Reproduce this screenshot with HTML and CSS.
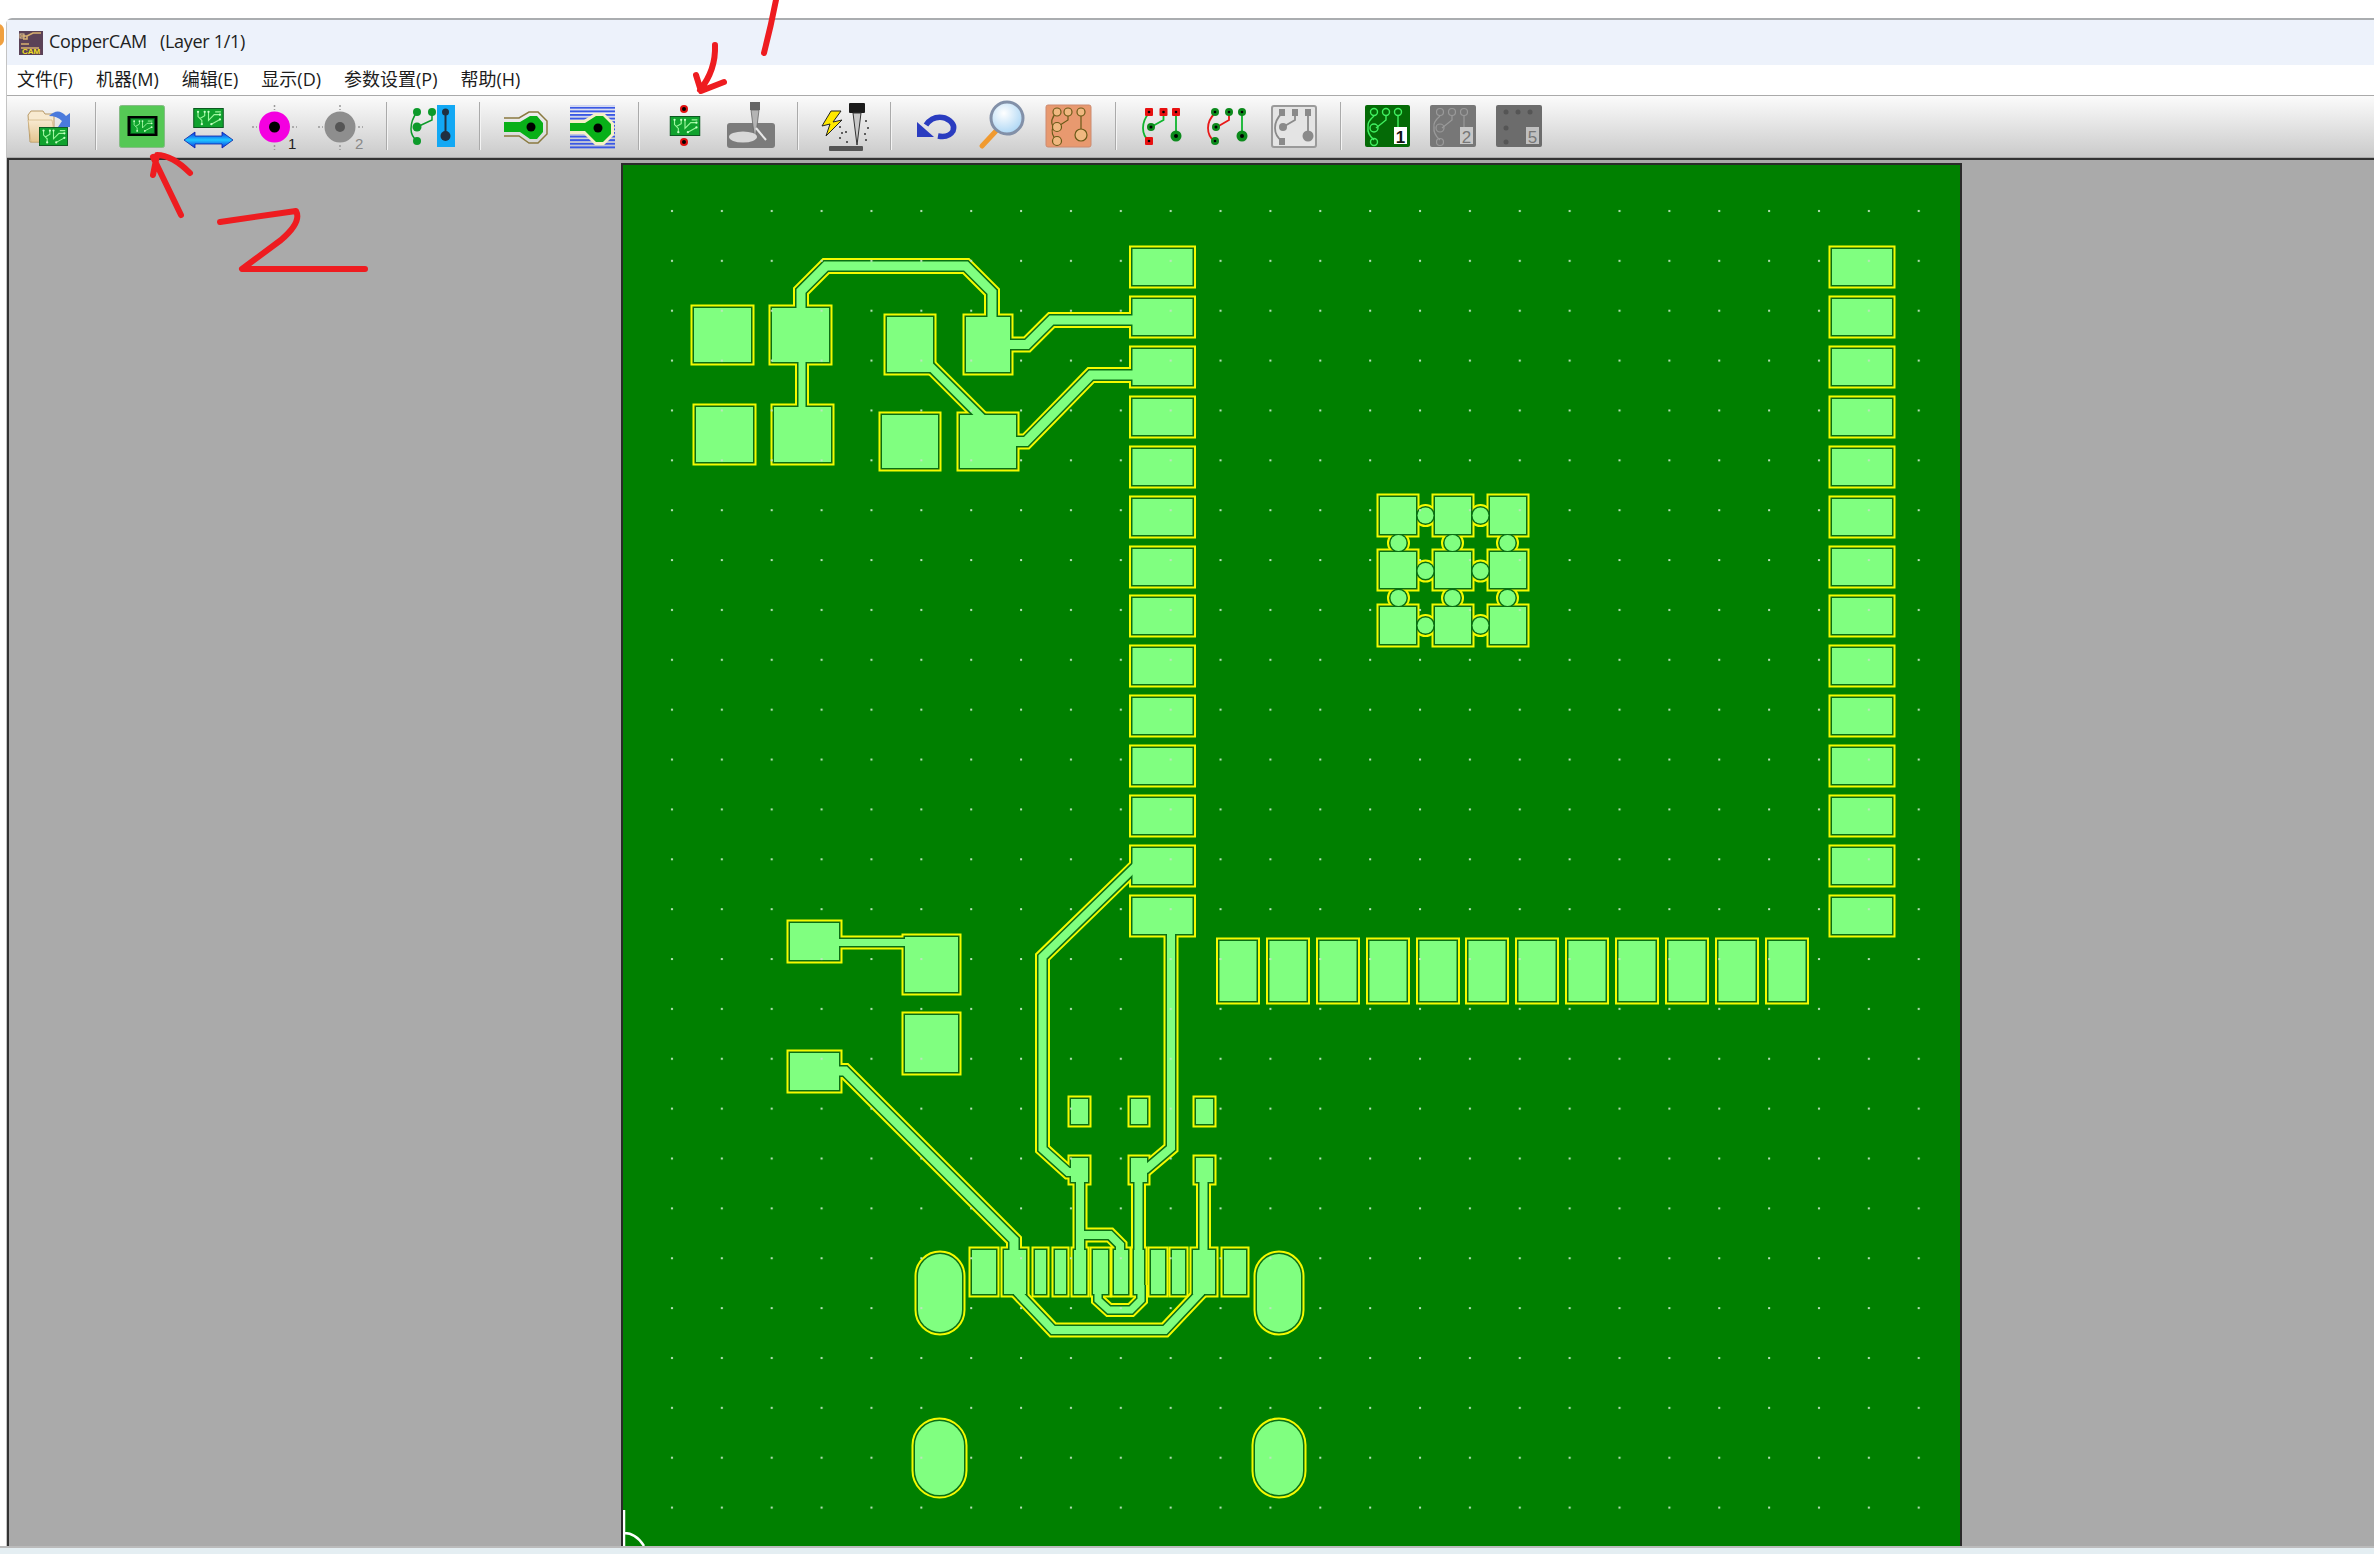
FILE: index.html
```html
<!DOCTYPE html>
<html lang="zh">
<head>
    <meta charset="UTF-8" />
    <title>CopperCAM</title>
    <link rel="stylesheet" href="styles.css">
</head>
<body>
<div class="page">
    <div class="behind"></div>
    <svg class="shared" width="0" height="0">
        <defs>
            <symbol id="mini" viewBox="0 0 32 21">
                <rect x="0.5" y="0.5" width="31" height="20" fill="#10a22e" stroke="#07541c"/>
                <path d="M5 4V9L9 13V17M12 4V8L7 11M16 4V13L22 7H28M19 17L28 12M23 4H29" fill="none" stroke="#9cf79c" stroke-width="1.2"/>
                <g fill="#c8ffc8"><circle cx="5" cy="4" r="1.2"/><circle cx="12" cy="4" r="1.2"/><circle cx="16" cy="4" r="1.2"/><circle cx="9" cy="17" r="1.2"/><circle cx="19" cy="17" r="1.2"/><circle cx="28" cy="12" r="1.2"/><circle cx="28" cy="7" r="1.2"/></g>
            </symbol>
            <linearGradient id="arrow-blue" x1="0" y1="0" x2="0" y2="1">
                <stop offset="0" stop-color="#0a2ee0"/><stop offset="0.5" stop-color="#20c8ff"/><stop offset="1" stop-color="#0a2ee0"/>
            </linearGradient>
            <radialGradient id="lens" cx="0.4" cy="0.35" r="0.7">
                <stop offset="0" stop-color="#ffffff"/><stop offset="1" stop-color="#a8d4f4"/>
            </radialGradient>
            <linearGradient id="folder" x1="0" y1="0" x2="0" y2="1">
                <stop offset="0" stop-color="#f8ead0"/><stop offset="1" stop-color="#e4c490"/>
            </linearGradient>
            <pattern id="stripes" width="6" height="3.6" patternUnits="userSpaceOnUse">
                <rect width="6" height="2" fill="#3a58e4"/>
            </pattern>
        </defs>
    </svg>

    <div class="window">
        <div class="titlebar">
            <svg class="app-icon" width="24" height="24" viewBox="0 0 24 24">
                <rect width="24" height="24" fill="#5b4257"/>
                <path d="M2 5H8V8H4M8 5L14 2H22M2 13H10M2 17H20" fill="none" stroke="#d8b070" stroke-width="1.6"/>
                <rect x="1" y="3" width="4" height="4" fill="none" stroke="#e8c890"/>
                <text class="app-icon-text" x="12" y="23">CAM</text>
            </svg>
            <span class="title-text">CopperCAM   (Layer 1/1)</span>
        </div>
        <nav class="menubar">
            <span>文件(F)</span>
            <span>机器(M)</span>
            <span>编辑(E)</span>
            <span>显示(D)</span>
            <span>参数设置(P)</span>
            <span>帮助(H)</span>
        </nav>
        <div class="toolbar">
            <svg class="tool" viewBox="0 0 66 61">
                <path d="M12 19L15 15H27L29 18H38V46H14Z" fill="#f8ead0" stroke="#b89a68"/>
                <path d="M12 24H36L40 46H15Z" fill="url(#folder)" stroke="#c8a870" stroke-width="0.6"/>
                <path d="M33 20Q42 11 50 20L54 17V31H42L46 25Q41 20 33 20Z" fill="#4a7adc"/>
                <use href="#mini" x="22" y="31" width="31" height="19"/>
            </svg>
            <i class="sep"></i>
            <svg class="tool" viewBox="0 0 66 61">
                <rect x="10.5" y="9.5" width="45" height="42" rx="2" fill="#55c855" stroke="#86bb86"/>
                <rect x="18.5" y="20" width="30" height="20" fill="#000"/>
                <use href="#mini" x="20.5" y="22" width="26" height="16"/>
            </svg>
            <svg class="tool" viewBox="0 0 66 61">
                <use href="#mini" x="18" y="12" width="31" height="20"/>
                <path d="M9 44L20 36V40H47V36L58 44L47 52V48H20V52Z" fill="url(#arrow-blue)" stroke="#0a1ea8" stroke-width="0.8"/>
            </svg>
            <svg class="tool" viewBox="0 0 66 61">
                <path class="tick" d="M33.5 9V14M33.5 49V54M11 31H16M51 31H56"/>
                <circle cx="33.5" cy="31" r="15.5" fill="#f400e0"/>
                <circle cx="33.5" cy="31" r="5.5" fill="#000"/>
                <text class="tool-num" x="47" y="53">1</text>
            </svg>
            <svg class="tool" viewBox="0 0 66 61">
                <path class="tick" d="M33 9V14M33 49V54M11 31H16M51 31H56"/>
                <circle cx="33" cy="31" r="15.5" fill="#8e8e8e"/>
                <circle cx="33" cy="31" r="5" fill="#555"/>
                <text class="tool-num dim" x="48" y="53">2</text>
            </svg>
            <i class="sep"></i>
            <svg class="tool" viewBox="0 0 66 61">
                <path d="M17 16Q11 24 11 33Q11 40 17 45M32 16V24L17 31" fill="none" stroke="#0c9a2a" stroke-width="1.5"/>
                <g fill="#0c9a2a"><circle cx="17" cy="16" r="4"/><circle cx="32" cy="16" r="4"/><circle cx="17" cy="31" r="4.5"/><circle cx="17" cy="45" r="4"/></g>
                <rect x="37" y="9" width="18" height="42" fill="#12a8f4"/>
                <path d="M45.5 16V40" stroke="#203040" stroke-width="2"/>
                <circle cx="45.5" cy="16" r="3.5" fill="#203040"/><circle cx="45.5" cy="40" r="5" fill="#203040"/>
            </svg>
            <i class="sep"></i>
            <svg class="tool" viewBox="0 0 66 61">
                <path d="M11 22H26L36 16H45L54 25V38L45 47H36L26 40H11" fill="none" stroke="#8a7a40" stroke-width="1.5"/>
                <path d="M11 26H27L37 20H44L50 27V36L44 43H37L27 36H11Z" fill="#08b018"/>
                <circle cx="38" cy="31" r="4.5" fill="#000"/>
            </svg>
            <svg class="tool" viewBox="0 0 66 61">
                <rect x="11" y="9" width="45" height="44" fill="url(#stripes)"/>
                <path d="M11 24H25L36 17H45L55 27V39L45 49H36L25 38H11Z" fill="#f6f0c8"/>
                <path d="M11 27H26L37 20H44L52 28V38L44 46H37L26 35H11Z" fill="#08b018"/>
                <circle cx="39" cy="32" r="4.5" fill="#000"/>
            </svg>
            <i class="sep"></i>
            <svg class="tool" viewBox="0 0 66 61">
                <use href="#mini" x="17" y="20" width="32" height="20"/>
                <circle cx="32" cy="13" r="4" fill="#e01010"/><circle cx="32" cy="13" r="2" fill="#000"/>
                <circle cx="32" cy="46" r="4" fill="#e01010"/><circle cx="32" cy="46" r="2" fill="#000"/>
            </svg>
            <svg class="tool" viewBox="0 0 66 61">
                <rect x="9" y="27" width="48" height="25" rx="3" fill="#7b7b7b"/>
                <rect x="32" y="6" width="10" height="8" fill="#666"/>
                <path d="M33 14H41L39 30L37 44L35 30Z" fill="#b4b4b4" stroke="#666" stroke-width="0.8"/>
                <ellipse cx="25" cy="41" rx="14" ry="5.5" fill="#d8d8d8"/>
                <path d="M38 32L48 44" stroke="#e8e8e8" stroke-width="2"/>
            </svg>
            <i class="sep"></i>
            <svg class="tool" viewBox="0 0 66 61">
                <rect x="18" y="50" width="34" height="5" rx="1" fill="#555"/>
                <rect x="38" y="7" width="16" height="10" rx="1" fill="#1a1a1a"/>
                <path d="M42 17H50L46 49Z" fill="#c8c8c8" stroke="#333"/>
                <path d="M20 15L11 30L19 28L15 40L31 24L22 26L30 15Z" fill="#ffe800" stroke="#222"/>
                <path class="spark" d="M28 31h2M34 36h2M28 42h2M54 25h2M56 32h2M53 38h2M54 44h2M35 46h2M30 37h2"/>
            </svg>
            <i class="sep"></i>
            <svg class="tool" viewBox="0 0 66 61">
                <path d="M22 29Q29 19 41 22Q52 27 49 35Q45 42 34 40" fill="none" stroke="#2a3cc0" stroke-width="5.5"/>
                <path d="M13 26L30 41H13Z" fill="#2a3cc0"/>
            </svg>
            <svg class="tool" viewBox="0 0 66 61">
                <path d="M26 35L12 50" stroke="#f09a30" stroke-width="5" stroke-linecap="round"/>
                <circle cx="37" cy="22" r="16" fill="url(#lens)" stroke="#8290a8" stroke-width="3"/>
            </svg>
            <svg class="tool" viewBox="0 0 66 61">
                <rect x="10" y="9" width="45" height="42" rx="2" fill="#e8996f" stroke="#cc8a70"/>
                <g class="ring-lines">
                    <path d="M21 16Q13 24 17 31Q14 38 21 45M32 16V24L21 31M45 16V34"/>
                    <circle cx="21" cy="16" r="4"/><circle cx="32" cy="16" r="4"/><circle cx="45" cy="16" r="4"/>
                    <circle cx="21" cy="31" r="4.5"/><circle cx="21" cy="45" r="4.5"/><circle cx="45" cy="39" r="6"/>
                </g>
            </svg>
            <i class="sep"></i>
            <svg class="tool" viewBox="0 0 66 61">
                <path d="M20 17Q14 24 14 32Q14 40 20 45M34.5 17V24L22 31M47 17V40" fill="none" stroke="#0fb52e" stroke-width="1.8"/>
                <g fill="#e81010"><rect x="16" y="12" width="8" height="8" rx="1"/><rect x="30.5" y="12" width="8" height="8" rx="1"/><rect x="43" y="12" width="8" height="8" rx="1"/><rect x="16" y="41" width="8" height="8" rx="1"/></g>
                <circle cx="22" cy="31" r="4" fill="#0c8a1c"/><circle cx="47" cy="40" r="5.5" fill="#0c8a1c"/>
                <g fill="#000"><circle cx="20" cy="16" r="1.3"/><circle cx="34.5" cy="16" r="1.3"/><circle cx="47" cy="16" r="1.3"/><circle cx="22" cy="31" r="1.5"/><circle cx="47" cy="40" r="2"/><circle cx="20" cy="45" r="1.3"/></g>
            </svg>
            <svg class="tool" viewBox="0 0 66 61">
                <path d="M20 17Q13 24 13 32Q13 40 19 45" fill="none" stroke="#e81818" stroke-width="1.8"/>
                <path d="M34 17V24L22 31" fill="none" stroke="#e81818" stroke-width="1.8"/>
                <path d="M47 17V40" fill="none" stroke="#0fb52e" stroke-width="1.8"/>
                <g fill="#0c8a1c"><circle cx="20" cy="16" r="4"/><circle cx="34" cy="16" r="4"/><circle cx="47" cy="16" r="4"/><circle cx="20" cy="45" r="4"/><circle cx="21" cy="31" r="4"/><circle cx="47" cy="40" r="5.5"/></g>
                <g fill="#000"><circle cx="20" cy="16" r="1.3"/><circle cx="34" cy="16" r="1.3"/><circle cx="47" cy="16" r="1.3"/><circle cx="21" cy="31" r="1.5"/><circle cx="47" cy="40" r="2"/><circle cx="20" cy="45" r="1.3"/></g>
            </svg>
            <svg class="tool" viewBox="0 0 66 61">
                <rect x="11" y="10" width="44" height="41" rx="2" fill="#e4e4e4" stroke="#9a9a9a" stroke-width="2"/>
                <path d="M21 17Q14 24 14 32Q14 40 21 45M34 17V24L22 31M47 17V40" fill="none" stroke="#8a8a8a" stroke-width="1.8"/>
                <g fill="#8a8a8a"><rect x="18" y="13" width="6" height="7"/><rect x="31" y="13" width="6" height="7"/><rect x="44" y="13" width="6" height="7"/><rect x="18" y="42" width="6" height="7"/><circle cx="22" cy="31" r="4"/><circle cx="47" cy="40" r="5.5"/></g>
            </svg>
            <i class="sep"></i>
            <svg class="tool" viewBox="0 0 66 61">
                <rect x="11" y="9" width="45" height="42" rx="2" fill="#046a06"/>
                <g class="ring-bright">
                    <path d="M20 20Q13 26 14 31Q13 38 20 44M32 20V24L22 32M44 20V31"/>
                    <circle cx="20" cy="16" r="3.5"/><circle cx="32" cy="16" r="3.5"/><circle cx="44" cy="16" r="3.5"/>
                    <circle cx="20" cy="32" r="4"/><circle cx="20" cy="46" r="3.5"/>
                </g>
                <rect x="40" y="31" width="13" height="17" fill="#fff"/>
                <text class="layer-num" x="46.5" y="47">1</text>
            </svg>
            <svg class="tool" viewBox="0 0 66 61">
                <rect x="10" y="9" width="46" height="42" rx="2" fill="#777"/>
                <g class="ring-dim">
                    <path d="M20 20Q13 26 14 31Q13 38 20 44M32 20V24L22 32M44 20V31"/>
                    <circle cx="20" cy="16" r="3.5"/><circle cx="32" cy="16" r="3.5"/><circle cx="44" cy="16" r="3.5"/>
                    <circle cx="20" cy="32" r="4"/><circle cx="20" cy="46" r="3.5"/>
                </g>
                <rect x="40" y="31" width="13" height="17" fill="#c8c8c8"/>
                <text class="layer-num dim" x="46.5" y="47">2</text>
            </svg>
            <svg class="tool" viewBox="0 0 66 61">
                <rect x="10" y="9" width="46" height="42" rx="2" fill="#6c6c6c"/>
                <g fill="#555"><circle cx="20" cy="16" r="2.5"/><circle cx="32" cy="16" r="2.5"/><circle cx="44" cy="16" r="2.5"/><circle cx="20" cy="32" r="2.5"/><circle cx="20" cy="46" r="2.5"/></g>
                <rect x="40" y="31" width="13" height="17" fill="#c0c0c0"/>
                <text class="layer-num dim" x="46.5" y="47">5</text>
            </svg>
        </div>
        <main class="canvas">
            <div class="board">
                <svg class="board-svg" viewBox="623 165 1337 1381" width="1337" height="1381">
                    <defs>
                        <pattern id="dots" x="647" y="186" width="49.87" height="49.87" patternUnits="userSpaceOnUse">
                            <rect x="24" y="24" width="2" height="2" fill="#bfe4bf"/>
                        </pattern>
                        <g id="column">
                            <rect class="pad" y="249" width="60" height="36"/>
                            <rect class="pad" y="299" width="60" height="36"/>
                            <rect class="pad" y="349" width="60" height="36"/>
                            <rect class="pad" y="399" width="60" height="36"/>
                            <rect class="pad" y="449" width="60" height="36"/>
                            <rect class="pad" y="499" width="60" height="36"/>
                            <rect class="pad" y="549" width="60" height="36"/>
                            <rect class="pad" y="598" width="60" height="36"/>
                            <rect class="pad" y="648" width="60" height="36"/>
                            <rect class="pad" y="698" width="60" height="36"/>
                            <rect class="pad" y="748" width="60" height="36"/>
                            <rect class="pad" y="798" width="60" height="36"/>
                            <rect class="pad" y="848" width="60" height="36"/>
                            <rect class="pad" y="898" width="60" height="36"/>
                        </g>
                        <g id="copper">
                            <use href="#column" x="1132.5"/>
                            <use href="#column" x="1832"/>

                            <!-- bottom row -->
                            <rect class="pad" x="1219.5" y="941" width="37" height="60"/>
                            <rect class="pad" x="1269.5" y="941" width="37" height="60"/>
                            <rect class="pad" x="1319.5" y="941" width="37" height="60"/>
                            <rect class="pad" x="1369.5" y="941" width="37" height="60"/>
                            <rect class="pad" x="1419.5" y="941" width="37" height="60"/>
                            <rect class="pad" x="1468.5" y="941" width="37" height="60"/>
                            <rect class="pad" x="1518.5" y="941" width="37" height="60"/>
                            <rect class="pad" x="1568.5" y="941" width="37" height="60"/>
                            <rect class="pad" x="1618.5" y="941" width="37" height="60"/>
                            <rect class="pad" x="1668.5" y="941" width="37" height="60"/>
                            <rect class="pad" x="1718.5" y="941" width="37" height="60"/>
                            <rect class="pad" x="1768.5" y="941" width="37" height="60"/>

                            <!-- top left cluster -->
                            <rect class="pad" x="694" y="308" width="57" height="54"/>
                            <rect class="pad" x="772" y="308" width="57" height="54"/>
                            <rect class="pad" x="696" y="407" width="57" height="55"/>
                            <rect class="pad" x="774" y="407" width="57" height="55"/>
                            <rect class="pad" x="887" y="317" width="46" height="55"/>
                            <rect class="pad" x="966" y="317" width="44" height="55"/>
                            <rect class="pad" x="882" y="415" width="56" height="53"/>
                            <rect class="pad" x="960" y="415" width="56" height="53"/>
                            <polyline class="trace w9" points="992,330 992,292 966,266 826,266 801,291 801,312"/>
                            <polyline class="trace w7" points="802,350 802,420"/>
                            <polyline class="trace w8" points="925,361 985,421"/>
                            <polyline class="trace w9" points="1000,344.5 1027,344.5 1051.5,320 1140,320"/>
                            <polyline class="trace w9" points="1005,441.5 1026,441.5 1091,375 1140,375"/>

                            <!-- 3x3 grid -->
                            <rect class="pad" x="1380" y="497" width="36" height="37"/>
                            <rect class="pad" x="1435" y="497" width="36" height="37"/>
                            <rect class="pad" x="1490" y="497" width="36" height="37"/>
                            <rect class="pad" x="1380" y="552" width="36" height="36"/>
                            <rect class="pad" x="1435" y="552" width="36" height="36"/>
                            <rect class="pad" x="1490" y="552" width="36" height="36"/>
                            <rect class="pad" x="1380" y="607" width="36" height="37"/>
                            <rect class="pad" x="1435" y="607" width="36" height="37"/>
                            <rect class="pad" x="1490" y="607" width="36" height="37"/>
                            <circle class="pad" cx="1425.5" cy="515.5" r="8"/>
                            <circle class="pad" cx="1480.5" cy="515.5" r="8"/>
                            <circle class="pad" cx="1425.5" cy="571" r="8"/>
                            <circle class="pad" cx="1480.5" cy="571" r="8"/>
                            <circle class="pad" cx="1425.5" cy="625.5" r="8"/>
                            <circle class="pad" cx="1480.5" cy="625.5" r="8"/>
                            <circle class="pad" cx="1398.5" cy="543" r="8"/>
                            <circle class="pad" cx="1452.5" cy="543" r="8"/>
                            <circle class="pad" cx="1507.5" cy="543" r="8"/>
                            <circle class="pad" cx="1398.5" cy="598" r="8"/>
                            <circle class="pad" cx="1452.5" cy="598" r="8"/>
                            <circle class="pad" cx="1507.5" cy="598" r="8"/>

                            <!-- left middle -->
                            <rect class="pad" x="790" y="923" width="49" height="37"/>
                            <rect class="pad" x="905" y="937" width="53" height="55"/>
                            <rect class="pad" x="905" y="1015" width="53" height="57"/>
                            <rect class="pad" x="790" y="1053" width="49" height="37"/>
                            <polyline class="trace w7" points="835,942.5 915,942.5"/>
                            <polyline class="trace w9" points="835,1071 845,1071 1014,1240 1014,1270"/>

                            <!-- usb -->
                            <rect class="pad" x="1071" y="1099" width="17" height="25"/>
                            <rect class="pad" x="1131" y="1099" width="16" height="25"/>
                            <rect class="pad" x="1196" y="1099" width="17" height="25"/>
                            <rect class="pad" x="1071" y="1158" width="17" height="24"/>
                            <rect class="pad" x="1131" y="1158" width="16" height="24"/>
                            <rect class="pad" x="1196" y="1158" width="17" height="24"/>
                            <rect class="pad" x="972" y="1250" width="24" height="44"/>
                            <rect class="pad" x="1004" y="1250" width="22" height="44"/>
                            <rect class="pad" x="1035" y="1250" width="11" height="44"/>
                            <rect class="pad" x="1055" y="1250" width="11" height="44"/>
                            <rect class="pad" x="1074" y="1250" width="12" height="44"/>
                            <rect class="pad" x="1093" y="1250" width="15" height="44"/>
                            <rect class="pad" x="1114" y="1250" width="14" height="44"/>
                            <rect class="pad" x="1134" y="1250" width="10" height="44"/>
                            <rect class="pad" x="1151" y="1250" width="14" height="44"/>
                            <rect class="pad" x="1172" y="1250" width="13" height="44"/>
                            <rect class="pad" x="1193" y="1250" width="22" height="44"/>
                            <rect class="pad" x="1224" y="1250" width="22" height="44"/>
                            <polyline class="trace w8" points="1140,862 1042.5,957 1042.5,1149 1068,1172 1080,1172"/>
                            <polyline class="trace w8" points="1171,925 1171,1148 1145,1170"/>
                            <polyline class="trace w8" points="1080,1175 1080,1260"/>
                            <polyline class="trace w8" points="1138.5,1175 1138.5,1260"/>
                            <polyline class="trace w8" points="1203.5,1175 1203.5,1260"/>
                            <polyline class="trace w8" points="1080,1235 1110,1235 1120,1245 1120,1260"/>
                            <polyline class="trace w7" points="1098,1285 1098,1300 1109,1310 1131,1310 1141,1300 1141,1285"/>
                            <polyline class="trace w8" points="1018,1285 1018,1293 1053,1330 1165,1330 1200,1293 1200,1285"/>
                            <rect class="pad" x="918" y="1254" width="44" height="78" rx="22"/>
                            <rect class="pad" x="1257" y="1254" width="44" height="78" rx="22"/>
                            <rect class="pad" x="915" y="1421" width="49" height="74" rx="24.5"/>
                            <rect class="pad" x="1255" y="1421" width="48" height="74" rx="24"/>
                        </g>
                    </defs>
                    <use class="layer-out" href="#copper"/>
                    <use class="layer-gap" href="#copper"/>
                    <use class="layer-fill" href="#copper"/>
                    <rect x="640" y="180" width="1320" height="1366" fill="url(#dots)"/>
                    <path class="cursor" d="M624 1510V1546M624 1533Q636 1533 644 1546"/>
                </svg>
            </div>
        </main>
    </div>
    <div class="bottom-strip"></div>

    <!-- red pen marks on top of the screenshot -->
    <svg class="pen" width="2374" height="1554" viewBox="0 0 2374 1554">
        <path d="M776 0Q771 26 764 53"/>
        <path d="M715 45Q716 70 700 90M696 75L701 91L724 82"/>
        <path d="M153 157L181 215M153 175L157 155Q172 155 190 173"/>
        <path d="M220 222L296 211Q302 222 281 240L242 269H365"/>
    </svg>
</div>
</body>
</html>
```
FILE: styles.css
```css
html, body { margin: 0; padding: 0; background: #fff; }
.page { position: relative; width: 2374px; height: 1554px; overflow: hidden; display: flex; flex-direction: column; }
.shared { position: absolute; }
.behind { position: absolute; left: -8px; top: 24px; width: 12px; height: 22px; border-radius: 6px; background: #f0a040; }

.window { flex: 1; min-height: 0; margin: 18px 0 0 6px; border-top: 2px solid #aaadb0; border-left: 1px solid #c4c4c4; display: flex; flex-direction: column; border-top-left-radius: 6px; }

.titlebar { height: 45px; background: #edf2fb; display: flex; align-items: center; padding-left: 12px; box-sizing: border-box; }
.app-icon { margin-right: 6px; }
.app-icon-text { font: bold 8px "Liberation Sans", sans-serif; fill: #f4e020; text-anchor: middle; }
.title-text { font: 18px "Open Sans", sans-serif; color: #222; white-space: pre; letter-spacing: -0.3px; margin-top: -3px; }

.menubar { height: 27px; box-sizing: border-box; padding: 0 0 2px 10px; background: #fff; display: flex; align-items: center; gap: 23px; font: 18px "Open Sans", "Noto Sans CJK SC", sans-serif; color: #1c1c1c; }

.toolbar { height: 61px; margin-top: 3px; display: flex; padding-left: 9px; border-top: 1px solid #aaa; border-bottom: 1px solid #aaa; background: linear-gradient(#fbfbfb, #ededed 30%, #cacaca); }
.tool { width: 66px; height: 61px; flex: none; }
.sep { width: 1px; height: 48px; margin: 6px 13px 0; background: #aaa; box-shadow: 1px 0 0 #f4f4f4; flex: none; }
.tick { stroke: #999; stroke-width: 1.5; stroke-dasharray: 2 2; fill: none; }
.tool-num { font: 15px "Liberation Sans", sans-serif; fill: #222; }
.tool-num.dim { fill: #888; }
.layer-num { font: bold 17px "Liberation Sans", sans-serif; fill: #111; text-anchor: middle; }
.layer-num.dim { fill: #777; font-weight: normal; }
.spark { stroke: #333; stroke-width: 1.6; fill: none; stroke-dasharray: 2 2; }
.ring-lines path, .ring-lines circle { stroke: #6a5a18; stroke-width: 1.2; fill: none; }
.ring-lines circle { fill: #f0b880; }
.ring-bright path, .ring-bright circle { stroke: #40f060; stroke-width: 1.4; fill: none; }
.ring-dim path, .ring-dim circle { stroke: #9a9a9a; stroke-width: 1.2; fill: none; }

.canvas { flex: 1; min-height: 0; background: #aaa; border-top: 2px solid #333; border-left: 2px solid #333; padding: 3px 0 0 612px; box-sizing: border-box; }
.board { width: 1337px; height: 1383px; border: 2px solid #2a2a2a; border-bottom: 0; background: #008000; }
.board-svg { display: block; }

/* copper drawn three times, each layer grown a little less */
.layer-out { --c: #f4fa00; --grow: 7px; }
.layer-gap { --c: #0a6e14; --grow: 3px; }
.layer-fill { --c: #80ff80; --grow: 0px; }
.pad { fill: var(--c); stroke: var(--c); stroke-width: var(--grow); }
.trace { fill: none; stroke: var(--c); stroke-width: calc(var(--w) + var(--grow)); stroke-linejoin: miter; }
.w7 { --w: 7px; }
.w8 { --w: 8px; }
.w9 { --w: 9px; }

.cursor { fill: none; stroke: #fff; stroke-width: 2.5; }

.bottom-strip { height: 8px; flex: none; box-sizing: border-box; border-top: 2px solid #bbb; background: #e4eef2; }

.pen { position: absolute; left: 0; top: 0; pointer-events: none; }
.pen path { fill: none; stroke: #ee1c20; stroke-width: 6; stroke-linecap: round; stroke-linejoin: round; }
```
